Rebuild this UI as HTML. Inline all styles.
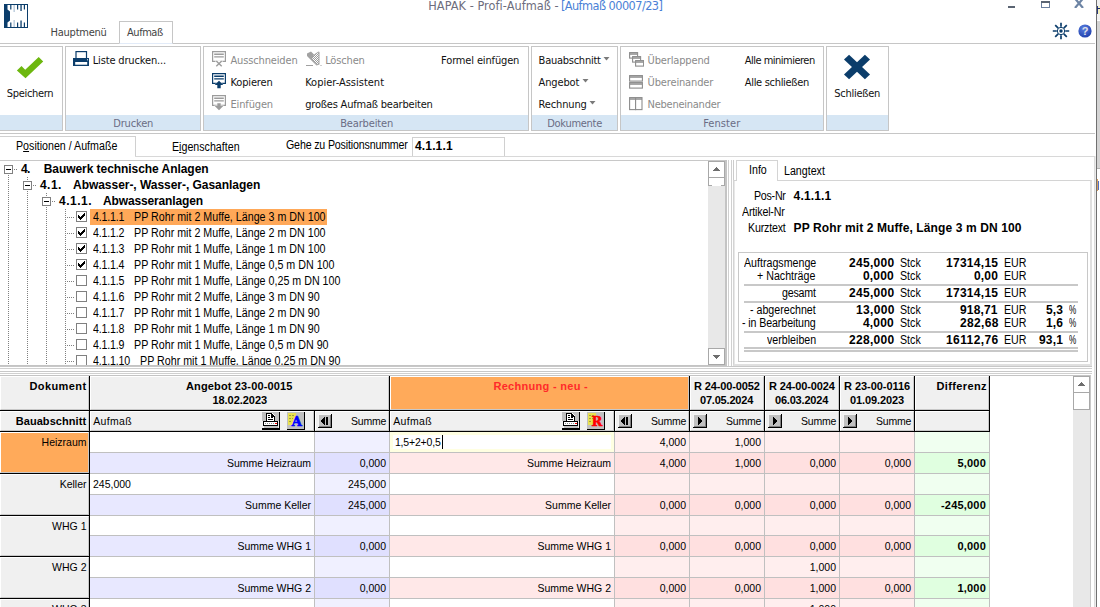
<!DOCTYPE html>
<html lang="de"><head><meta charset="utf-8"><title>HAPAK - Profi-Aufmaß</title>
<style>
html,body{margin:0;padding:0;background:#fff}
body{width:1100px;height:607px;overflow:hidden;position:relative;font-family:"Liberation Sans",sans-serif;font-size:11px;color:#000}
div,svg{position:absolute;box-sizing:border-box}
.t{white-space:pre;line-height:14px;height:14px;font-variant-ligatures:none}
.rb{font-family:"DejaVu Sans Condensed","Liberation Sans",sans-serif;font-size:11px;color:#111;letter-spacing:-0.15px;margin-top:1px}
.rd{color:#8a8a8a}
.gl{font-family:"DejaVu Sans Condensed","Liberation Sans",sans-serif;font-size:11px;color:#6a6c84;letter-spacing:-0.15px;margin-top:1px}
.ms{font-family:"Liberation Sans",sans-serif;font-size:12px;transform:scaleX(0.888);transform-origin:0 50%}
.msb{font-family:"Liberation Sans",sans-serif;font-size:12px;font-weight:bold;letter-spacing:0.15px}
.tb{font-family:"Liberation Sans",sans-serif;font-size:10.5px}
.tbb{font-family:"Liberation Sans",sans-serif;font-size:11px;font-weight:bold;letter-spacing:0.2px}
</style></head>
<body>
<svg style="left:4px;top:4px" width="24" height="24" viewBox="0 0 24 24"><rect width="24" height="24" fill="#0b3d6b"/><path d="M3.500 1H23V23H3.500V18.500L6 16.500V7.500L3.500 5.500z" fill="#fff"/><g fill="#0b3d6b"><rect x="6.200" y="1" width="1.200" height="4.500"/><rect x="13" y="1" width="1.200" height="4.500"/><rect x="16.400" y="1" width="1.300" height="6"/><rect x="19.800" y="1" width="1.200" height="4.500"/><rect x="6.200" y="18.500" width="1.200" height="4.500"/><rect x="13" y="18.500" width="1.200" height="4.500"/><rect x="16.400" y="16.500" width="1.300" height="6.500"/><rect x="19.800" y="18.500" width="1.200" height="4.500"/></g><g fill="#b4c6d8"><rect x="9.500" y="1" width="1.300" height="7"/><rect x="9.500" y="16" width="1.300" height="7"/></g></svg>
<div id="f1" class="t" style="left:428.30px;top:-2px;letter-spacing:0.051px;font-family:'DejaVu Sans Condensed','Liberation Sans',sans-serif;font-size:12.6px;line-height:16px;height:16px;color:#6d6d7d">HAPAK - Profi-Aufmaß -</div>
<div id="f2" class="t" style="left:560.91px;top:-2px;letter-spacing:-0.546px;font-family:'DejaVu Sans Condensed','Liberation Sans',sans-serif;font-size:12.6px;line-height:16px;height:16px;color:#4a7fd6">[Aufmaß 00007/23]</div>
<div style="left:1008px;top:6px;width:7px;height:2px;background:#5a6472"></div>
<svg style="left:1041px;top:0px" width="10" height="9" viewBox="0 0 10 9"><rect x="0.5" y="1.5" width="8" height="6" fill="none" stroke="#6a7f9e" stroke-width="1"/><rect x="0" y="1" width="9" height="2" fill="#5a6472"/></svg>
<svg style="left:1074px;top:-2px" width="10" height="10" viewBox="0 0 10 10"><path d="M1 0.500L9 10M9 0.500L1 10" stroke="#6d84a4" stroke-width="2.200" fill="none"/><path d="M0.500 1.500h3M6.500 1.500h3" stroke="#3a3f48" stroke-width="1.200"/></svg>
<div style="left:1097px;top:0px;width:3px;height:607px;background:#fff"></div>
<div style="left:1097px;top:0px;width:3px;height:20px;background:#f0f0f0"></div>
<div style="left:1097px;top:21px;width:3px;height:147px;background:#d4d4d4"></div>
<div style="left:1097px;top:168px;width:3px;height:1px;background:#b0b0b0"></div>
<div style="left:1097px;top:6px;width:3px;height:8px;background:#f4f0c0"></div>
<div style="left:1097px;top:6px;width:1px;height:8px;background:#2a3a80"></div>
<div style="left:1097px;top:8px;width:3px;height:1px;background:#1a2a70"></div>
<div style="left:1097px;top:179px;width:1px;height:12px;background:#d8a060"></div>
<div style="left:1098px;top:181px;width:1px;height:9px;background:#5070c8"></div>
<div style="left:1096px;top:0px;width:1px;height:607px;background:#707070"></div>
<div style="left:1094px;top:156px;width:1px;height:451px;background:#dcdcdc"></div>
<div style="left:1095px;top:156px;width:1px;height:451px;background:#ececec"></div>
<div id="f3" class="t rb" style="left:50.60px;top:25px;letter-spacing:-0.251px;color:#444">Hauptmenü</div>
<div style="left:0px;top:43px;width:1095px;height:1px;background:#c6c6c6"></div>
<div style="left:119px;top:21px;width:54px;height:23px;border:1px solid #c6c6c6;border-bottom:1px solid #e2ebf8;background:#fff"></div>
<div id="f4" class="t rb" style="left:127.00px;top:25px;letter-spacing:-0.456px;color:#444">Aufmaß</div>
<svg style="left:1052px;top:22px" width="18" height="18" viewBox="0 0 18 18"><g stroke="#0b3d6b" stroke-width="1.700" fill="none"><circle cx="9" cy="9" r="3.700" stroke-width="1"/><path d="M9 0.800v4M9 13.200v4M0.800 9h4M13.200 9h4M3.200 3.200l3 3M11.800 11.800l3 3M3.200 14.800l3-3M11.800 6.200l3-3"/></g><circle cx="9" cy="9" r="1.700" fill="#0b3d6b"/></svg>
<svg style="left:1078px;top:24px" width="14" height="14" viewBox="0 0 14 14"><defs><radialGradient id="hg" cx="0.4" cy="0.3" r="0.8"><stop offset="0" stop-color="#5a7fe0"/><stop offset="1" stop-color="#1a3aa8"/></radialGradient></defs><circle cx="7" cy="7" r="6.6" fill="url(#hg)"/><text x="7" y="11" text-anchor="middle" font-family="Liberation Sans,sans-serif" font-weight="bold" font-size="11" fill="#e0e0e8">?</text></svg>
<div style="left:-3px;top:46px;width:66px;height:85px;border:1px solid #c6c6c6;background:#fff"></div>
<div style="left:-2px;top:115px;width:64px;height:15px;background:#d6e6f4"></div>
<div style="left:65px;top:46px;width:136px;height:85px;border:1px solid #c6c6c6;background:#fff"></div>
<div style="left:66px;top:115px;width:134px;height:15px;background:#d6e6f4"></div>
<div id="f5" class="t gl" style="left:113.20px;top:116px;letter-spacing:-0.150px;">Drucken</div>
<div style="left:203px;top:46px;width:326px;height:85px;border:1px solid #c6c6c6;background:#fff"></div>
<div style="left:204px;top:115px;width:324px;height:15px;background:#d6e6f4"></div>
<div id="f6" class="t gl" style="left:340.20px;top:116px;letter-spacing:-0.150px;">Bearbeiten</div>
<div style="left:531px;top:46px;width:87px;height:85px;border:1px solid #c6c6c6;background:#fff"></div>
<div style="left:532px;top:115px;width:85px;height:15px;background:#d6e6f4"></div>
<div id="f7" class="t gl" style="left:547.20px;top:116px;letter-spacing:-0.285px;">Dokumente</div>
<div style="left:620px;top:46px;width:204px;height:85px;border:1px solid #c6c6c6;background:#fff"></div>
<div style="left:621px;top:115px;width:202px;height:15px;background:#d6e6f4"></div>
<div id="f8" class="t gl" style="left:703.20px;top:116px;letter-spacing:0.075px;">Fenster</div>
<div style="left:826px;top:46px;width:63px;height:85px;border:1px solid #c6c6c6;background:#fff"></div>
<div style="left:827px;top:115px;width:61px;height:15px;background:#d6e6f4"></div>
<div style="left:0px;top:133px;width:1095px;height:1px;background:#c6c6c6"></div>
<svg style="left:16px;top:56px" width="28" height="24" viewBox="16 56 28 24"><path d="M16.900 70.500L21.500 66L25.200 69.700L38.700 56.900L43.200 61.500L25.500 78.300Z" fill="#6db70f"/></svg>
<div id="f9" class="t rb" style="left:6.80px;top:86px;letter-spacing:-0.319px;">Speichern</div>
<svg style="left:73px;top:51px" width="16" height="15" viewBox="0 0 16 15"><rect x="3" y="0.600" width="10.500" height="7" fill="#fff" stroke="#0b3d6b" stroke-width="1.200"/><rect x="0" y="7" width="16" height="8" fill="#0b3d6b"/><rect x="2.200" y="11" width="12" height="2.700" fill="#fff"/><rect x="14" y="8.300" width="1" height="1" fill="#fff"/></svg>
<div id="f10" class="t rb" style="left:92.70px;top:53px;letter-spacing:-0.150px;">Liste drucken...</div>
<svg style="left:212px;top:51px" width="14" height="16" viewBox="0 0 14 16"><g fill="none" stroke="#9c9c9c"><path d="M0.600 0.600h12.800v9.800h-12.800z" stroke-width="1.200"/><path d="M2.200 3.300h9.600M2.200 5.900h9.600" stroke-width="1.400"/></g><rect x="3.500" y="9.500" width="7" height="2" fill="#fff"/><path d="M4.300 10l5.400 5.200M9.700 10l-5.400 5.200" stroke="#9c9c9c" stroke-width="1.400" fill="none"/></svg>
<div id="f11" class="t rb rd" style="left:230.50px;top:53px;letter-spacing:-0.150px;">Ausschneiden</div>
<svg style="left:212px;top:73px" width="14" height="16" viewBox="0 0 14 16"><g fill="none" stroke="#0b3d6b"><path d="M0.600 0.600h12.800v9.800h-12.800z" stroke-width="1.200"/><path d="M2.200 3.300h9.600M2.200 5.900h9.600" stroke-width="1.400"/></g><path d="M7 7.800l4.300 4.200h-2.600v3.200h-3.400v-3.200h-2.600z" fill="#0b3d6b" stroke="#fff" stroke-width="0.800" paint-order="stroke"/></svg>
<div id="f12" class="t rb" style="left:230.50px;top:75px;letter-spacing:-0.150px;">Kopieren</div>
<svg style="left:212px;top:95px" width="14" height="16" viewBox="0 0 14 16"><g fill="none" stroke="#9c9c9c"><path d="M0.600 0.600h12.800v9.800h-12.800z" stroke-width="1.200"/><path d="M2.200 3.300h9.600M2.200 5.900h9.600" stroke-width="1.400"/></g><path d="M7 15.200l4.300-4.200h-2.600v-2.800h-3.400v2.800h-2.600z" fill="#9c9c9c" stroke="#fff" stroke-width="0.800" paint-order="stroke"/></svg>
<div id="f13" class="t rb rd" style="left:230.50px;top:97px;letter-spacing:-0.150px;">Einfügen</div>
<svg style="left:306px;top:51px" width="16" height="16" viewBox="0 0 16 16"><defs><pattern id="ht" width="2" height="2" patternUnits="userSpaceOnUse"><rect width="2" height="2" fill="#fff"/><rect width="1" height="1" fill="#9a9a9a"/><rect x="1" y="1" width="1" height="1" fill="#9a9a9a"/></pattern></defs><path d="M1 2.500L5 0.500L8 3.500L12.500 0.500L13.500 1V13.500L10.500 14.500L1 5z" fill="#a2a2a2"/><path d="M8 4L12.500 1.500V12.500L10.500 13.200L6 8z" fill="url(#ht)"/><path d="M0 14.500h7" stroke="#a0a0a0" stroke-width="1"/><rect x="14.500" y="14" width="1" height="1" fill="#a0a0a0"/></svg>
<div id="f14" class="t rb rd" style="left:325.20px;top:53px;letter-spacing:-0.150px;">Löschen</div>
<div id="f15" class="t rb" style="left:305.20px;top:75px;letter-spacing:-0.006px;">Kopier-Assistent</div>
<div id="f16" class="t rb" style="left:305.20px;top:97px;letter-spacing:-0.201px;">großes Aufmaß bearbeiten</div>
<div id="f17" class="t rb" style="left:441.10px;top:53px;letter-spacing:-0.150px;">Formel einfügen</div>
<div id="f18" class="t rb" style="left:538.60px;top:53px;letter-spacing:-0.256px;">Bauabschnitt</div>
<svg style="left:603px;top:57px" width="7" height="4" viewBox="0 0 7 4"><path d="M0.500 0h6L3.500 3.500z" fill="#7a7a7a"/></svg>
<div id="f19" class="t rb" style="left:538.60px;top:75px;letter-spacing:-0.150px;">Angebot</div>
<svg style="left:582px;top:79px" width="7" height="4" viewBox="0 0 7 4"><path d="M0.500 0h6L3.500 3.500z" fill="#7a7a7a"/></svg>
<div id="f20" class="t rb" style="left:538.60px;top:97px;letter-spacing:-0.150px;">Rechnung</div>
<svg style="left:589px;top:101px" width="7" height="4" viewBox="0 0 7 4"><path d="M0.500 0h6L3.500 3.500z" fill="#7a7a7a"/></svg>
<svg style="left:629px;top:52px" width="15" height="15" viewBox="0 0 15 15"><g fill="#fff" stroke="#8c8c8c" stroke-width="1.1"><rect x="0.6" y="0.6" width="8" height="5.500"/><rect x="3.600" y="4.600" width="8" height="5.500"/><rect x="6.600" y="8.600" width="8" height="5.500"/><path d="M1 2h7M4 6h7M7 10h7" stroke-width="1.3"/></g></svg>
<div id="f21" class="t rb rd" style="left:647.60px;top:53px;letter-spacing:-0.150px;">Überlappend</div>
<svg style="left:629px;top:74px" width="15" height="15" viewBox="0 0 15 15"><g fill="#fff" stroke="#8c8c8c" stroke-width="1.1"><rect x="0.6" y="1.600" width="12.800" height="5.500"/><rect x="0.6" y="8.600" width="12.800" height="5.500"/><path d="M1 3h12M1 10h12" stroke-width="1.5"/></g></svg>
<div id="f22" class="t rb rd" style="left:647.60px;top:75px;letter-spacing:-0.150px;">Übereinander</div>
<svg style="left:629px;top:96px" width="15" height="15" viewBox="0 0 15 15"><g fill="#fff" stroke="#8c8c8c" stroke-width="1.1"><rect x="0.6" y="1.600" width="6" height="12"/><rect x="6.600" y="1.600" width="6.400" height="12"/><path d="M1 3h12" stroke-width="1.5"/></g></svg>
<div id="f23" class="t rb rd" style="left:647.60px;top:97px;letter-spacing:-0.255px;">Nebeneinander</div>
<div id="f24" class="t rb" style="left:744.80px;top:53px;letter-spacing:-0.516px;">Alle minimieren</div>
<div id="f25" class="t rb" style="left:744.80px;top:75px;letter-spacing:-0.316px;">Alle schließen</div>
<svg style="left:842px;top:53px" width="30" height="28" viewBox="-15 -14 30 28"><g fill="#0b3d6b" transform="scale(1,0.950)"><rect x="-14.800" y="-3.600" width="29.600" height="7.200" transform="rotate(45)"/><rect x="-14.800" y="-3.600" width="29.600" height="7.200" transform="rotate(-45)"/></g></svg>
<div id="f26" class="t rb" style="left:834.30px;top:86px;letter-spacing:-0.262px;">Schließen</div>
<div style="left:-1px;top:136px;width:137px;height:21px;border:1px solid #d0d0d0;border-bottom:none;background:#fff"></div>
<div style="left:135px;top:156px;width:960px;height:1px;background:#d8d8d8"></div>
<div id="f27" class="t ms" style="left:15.60px;top:139px;letter-spacing:0.000px;">P<u>o</u>sitionen / Aufmaße</div>
<div id="f28" class="t ms" style="left:172.40px;top:140px;letter-spacing:0.000px;">E<u>i</u>genschaften</div>
<div id="f29" class="t ms" style="left:285.60px;top:138px;letter-spacing:-0.188px;">Gehe zu Positionsnummer</div>
<div style="left:412px;top:137px;width:93px;height:19px;border:1px solid #d0d0d0;border-bottom:none;background:#fff"></div>
<div class="t msb" style="left:415px;top:139px;">4.1.1.1</div>
<div style="left:0px;top:160px;width:727px;height:1px;background:#c8c8c8"></div>
<div style="left:0px;top:161px;width:708px;height:204px;background:#fff"></div>
<div style="left:8px;top:175px;width:1px;height:190px;background:repeating-linear-gradient(to bottom,#808080 0 1px,transparent 1px 2px)"></div>
<div style="left:27px;top:191px;width:1px;height:174px;background:repeating-linear-gradient(to bottom,#808080 0 1px,transparent 1px 2px)"></div>
<div style="left:46px;top:207px;width:1px;height:158px;background:repeating-linear-gradient(to bottom,#808080 0 1px,transparent 1px 2px)"></div>
<div style="left:65px;top:209px;width:1px;height:156px;background:repeating-linear-gradient(to bottom,#808080 0 1px,transparent 1px 2px)"></div>
<div style="left:14px;top:169px;width:4px;height:1px;background:repeating-linear-gradient(to right,#808080 0 1px,transparent 1px 2px)"></div>
<div style="left:33px;top:185px;width:4px;height:1px;background:repeating-linear-gradient(to right,#808080 0 1px,transparent 1px 2px)"></div>
<div style="left:52px;top:201px;width:4px;height:1px;background:repeating-linear-gradient(to right,#808080 0 1px,transparent 1px 2px)"></div>
<div style="left:27px;top:177px;width:1px;height:4px;background:repeating-linear-gradient(to bottom,#808080 0 1px,transparent 1px 2px)"></div>
<div style="left:46px;top:193px;width:1px;height:4px;background:repeating-linear-gradient(to bottom,#808080 0 1px,transparent 1px 2px)"></div>
<div style="left:4px;top:165px;width:9px;height:9px;border:1px solid #808080;background:#fff"></div>
<div style="left:6px;top:169px;width:5px;height:1px;background:#000"></div>
<div style="left:23px;top:181px;width:9px;height:9px;border:1px solid #808080;background:#fff"></div>
<div style="left:25px;top:185px;width:5px;height:1px;background:#000"></div>
<div style="left:42px;top:197px;width:9px;height:9px;border:1px solid #808080;background:#fff"></div>
<div style="left:44px;top:201px;width:5px;height:1px;background:#000"></div>
<div id="f30" class="t msb" style="left:21.00px;top:162px;letter-spacing:-0.750px;">4.</div>
<div id="f31" class="t msb" style="left:43.70px;top:162px;letter-spacing:-0.055px;">Bauwerk technische Anlagen</div>
<div id="f32" class="t msb" style="left:40.00px;top:178px;letter-spacing:0.450px;">4.1.</div>
<div id="f33" class="t msb" style="left:73.00px;top:178px;letter-spacing:-0.036px;">Abwasser-, Wasser-, Gasanlagen</div>
<div id="f34" class="t msb" style="left:59.00px;top:194px;letter-spacing:0.510px;">4.1.1.</div>
<div id="f35" class="t msb" style="left:103.00px;top:194px;letter-spacing:-0.139px;">Abwasseranlagen</div>
<div style="left:90px;top:209px;width:237px;height:16px;background:#ffa858"></div>
<div style="left:67px;top:217px;width:8px;height:1px;background:repeating-linear-gradient(to right,#808080 0 1px,transparent 1px 2px)"></div>
<div style="left:76px;top:211px;width:11px;height:11px;border:1px solid #808080;background:#fff"><svg style="left:0px;top:0px" width="9" height="9" viewBox="0 0 9 9"><path shape-rendering="crispEdges" d="M1 3h1v1h1v1h1v-1h1v-1h1v-1h1v-1h1v3h-1v1h-1v1h-1v1h-1v1h-1v-1h-1v-1h-1z" fill="#000"/></svg></div>
<div class="t ms" style="left:92.8px;top:210px;letter-spacing:-0.2px">4.1.1.1</div>
<div class="t ms" style="left:134.2px;top:210px;transform:scaleX(0.891)">PP Rohr mit 2 Muffe, Länge 3 m DN 100</div>
<div style="left:67px;top:233px;width:8px;height:1px;background:repeating-linear-gradient(to right,#808080 0 1px,transparent 1px 2px)"></div>
<div style="left:76px;top:227px;width:11px;height:11px;border:1px solid #808080;background:#fff"><svg style="left:0px;top:0px" width="9" height="9" viewBox="0 0 9 9"><path shape-rendering="crispEdges" d="M1 3h1v1h1v1h1v-1h1v-1h1v-1h1v-1h1v3h-1v1h-1v1h-1v1h-1v1h-1v-1h-1v-1h-1z" fill="#000"/></svg></div>
<div class="t ms" style="left:92.8px;top:226px;letter-spacing:-0.2px">4.1.1.2</div>
<div class="t ms" style="left:134.2px;top:226px;transform:scaleX(0.891)">PP Rohr mit 2 Muffe, Länge 2 m DN 100</div>
<div style="left:67px;top:249px;width:8px;height:1px;background:repeating-linear-gradient(to right,#808080 0 1px,transparent 1px 2px)"></div>
<div style="left:76px;top:243px;width:11px;height:11px;border:1px solid #808080;background:#fff"><svg style="left:0px;top:0px" width="9" height="9" viewBox="0 0 9 9"><path shape-rendering="crispEdges" d="M1 3h1v1h1v1h1v-1h1v-1h1v-1h1v-1h1v3h-1v1h-1v1h-1v1h-1v1h-1v-1h-1v-1h-1z" fill="#000"/></svg></div>
<div class="t ms" style="left:92.8px;top:242px;letter-spacing:-0.2px">4.1.1.3</div>
<div class="t ms" style="left:134.2px;top:242px;transform:scaleX(0.891)">PP Rohr mit 1 Muffe, Länge 1 m DN 100</div>
<div style="left:67px;top:265px;width:8px;height:1px;background:repeating-linear-gradient(to right,#808080 0 1px,transparent 1px 2px)"></div>
<div style="left:76px;top:259px;width:11px;height:11px;border:1px solid #808080;background:#fff"><svg style="left:0px;top:0px" width="9" height="9" viewBox="0 0 9 9"><path shape-rendering="crispEdges" d="M1 3h1v1h1v1h1v-1h1v-1h1v-1h1v-1h1v3h-1v1h-1v1h-1v1h-1v1h-1v-1h-1v-1h-1z" fill="#000"/></svg></div>
<div class="t ms" style="left:92.8px;top:258px;letter-spacing:-0.2px">4.1.1.4</div>
<div class="t ms" style="left:134.2px;top:258px;transform:scaleX(0.891)">PP Rohr mit 1 Muffe, Länge 0,5 m DN 100</div>
<div style="left:67px;top:281px;width:8px;height:1px;background:repeating-linear-gradient(to right,#808080 0 1px,transparent 1px 2px)"></div>
<div style="left:76px;top:275px;width:11px;height:11px;border:1px solid #808080;background:#fff"></div>
<div class="t ms" style="left:92.8px;top:274px;letter-spacing:-0.2px">4.1.1.5</div>
<div class="t ms" style="left:134.2px;top:274px;transform:scaleX(0.891)">PP Rohr mit 1 Muffe, Länge 0,25 m DN 100</div>
<div style="left:67px;top:297px;width:8px;height:1px;background:repeating-linear-gradient(to right,#808080 0 1px,transparent 1px 2px)"></div>
<div style="left:76px;top:291px;width:11px;height:11px;border:1px solid #808080;background:#fff"></div>
<div class="t ms" style="left:92.8px;top:290px;letter-spacing:-0.2px">4.1.1.6</div>
<div class="t ms" style="left:134.2px;top:290px;transform:scaleX(0.891)">PP Rohr mit 2 Muffe, Länge 3 m DN 90</div>
<div style="left:67px;top:313px;width:8px;height:1px;background:repeating-linear-gradient(to right,#808080 0 1px,transparent 1px 2px)"></div>
<div style="left:76px;top:307px;width:11px;height:11px;border:1px solid #808080;background:#fff"></div>
<div class="t ms" style="left:92.8px;top:306px;letter-spacing:-0.2px">4.1.1.7</div>
<div class="t ms" style="left:134.2px;top:306px;transform:scaleX(0.891)">PP Rohr mit 1 Muffe, Länge 2 m DN 90</div>
<div style="left:67px;top:329px;width:8px;height:1px;background:repeating-linear-gradient(to right,#808080 0 1px,transparent 1px 2px)"></div>
<div style="left:76px;top:323px;width:11px;height:11px;border:1px solid #808080;background:#fff"></div>
<div class="t ms" style="left:92.8px;top:322px;letter-spacing:-0.2px">4.1.1.8</div>
<div class="t ms" style="left:134.2px;top:322px;transform:scaleX(0.891)">PP Rohr mit 1 Muffe, Länge 1 m DN 90</div>
<div style="left:67px;top:345px;width:8px;height:1px;background:repeating-linear-gradient(to right,#808080 0 1px,transparent 1px 2px)"></div>
<div style="left:76px;top:339px;width:11px;height:11px;border:1px solid #808080;background:#fff"></div>
<div class="t ms" style="left:92.8px;top:338px;letter-spacing:-0.2px">4.1.1.9</div>
<div class="t ms" style="left:134.2px;top:338px;transform:scaleX(0.891)">PP Rohr mit 1 Muffe, Länge 0,5 m DN 90</div>
<div style="left:67px;top:361px;width:8px;height:1px;background:repeating-linear-gradient(to right,#808080 0 1px,transparent 1px 2px)"></div>
<div style="left:76px;top:355px;width:11px;height:11px;border:1px solid #808080;background:#fff"></div>
<div class="t ms" style="left:92.8px;top:354px;letter-spacing:-0.2px">4.1.1.10</div>
<div class="t ms" style="left:140.2px;top:354px;transform:scaleX(0.891)">PP Rohr mit 1 Muffe, Länge 0,25 m DN 90</div>
<div style="left:708px;top:161px;width:17px;height:204px;background:#e8e8e8"></div>
<div style="left:708px;top:161px;width:17px;height:17px;border:1px solid #a8a8a8;background:#fff"><svg shape-rendering="crispEdges" style="left:4px;top:5px" width="7" height="4" viewBox="0 0 7 4"><path d="M3 0h1v1h1v1h1v1h1v1h-7v-1h1v-1h1v-1h1z" fill="#6e6e6e"/></svg></div>
<div style="left:708px;top:177px;width:17px;height:9px;border:1px solid #a8a8a8;background:#fff"></div>
<div style="left:712px;top:185px;width:9px;height:1px;background:#fff"></div>
<div style="left:712px;top:178px;width:9px;height:1px;background:#fff"></div>
<div style="left:708px;top:348px;width:17px;height:17px;border:1px solid #a8a8a8;background:#fff"><svg shape-rendering="crispEdges" style="left:4px;top:6px" width="7" height="4" viewBox="0 0 7 4"><path d="M0 0h7v1h-1v1h-1v1h-1v1h-1v-1h-1v-1h-1v-1h-1z" fill="#6e6e6e"/></svg></div>
<div style="left:725px;top:160px;width:2px;height:206px;background:#c4c4c4"></div>
<div style="left:0px;top:365px;width:727px;height:1px;background:#c4c4c4"></div>
<div style="left:728px;top:160px;width:1px;height:206px;background:#d0d0d0"></div>
<div style="left:731px;top:160px;width:1px;height:206px;background:#d0d0d0"></div>
<div style="left:733px;top:160px;width:1px;height:206px;background:#cccccc"></div>
<div style="left:733px;top:180px;width:359px;height:186px;border:1px solid #d4d4d4;border-right:2px solid #e0e0e0;border-bottom:2px solid #e0e0e0;background:#fff"></div>
<div style="left:734px;top:181px;width:1px;height:183px;background:#e8e8e8"></div>
<div style="left:736px;top:160px;width:42px;height:21px;border:1px solid #d4d4d4;border-bottom:none;background:#fff"></div>
<div id="f36" class="t ms" style="left:749.40px;top:163px;letter-spacing:0.000px;">Info</div>
<div id="f37" class="t ms" style="left:784.40px;top:164px;letter-spacing:0.000px;">Langtext</div>
<div id="f38" class="t ms" style="left:753.60px;top:189px;letter-spacing:-0.288px;">Pos-Nr</div>
<div id="f39" class="t msb" style="left:793.60px;top:189px;letter-spacing:0.150px;">4.1.1.1</div>
<div id="f40" class="t ms" style="left:742.00px;top:205px;letter-spacing:-0.200px;">Artikel-Nr</div>
<div id="f41" class="t ms" style="left:747.60px;top:221px;letter-spacing:-0.206px;">Kurztext</div>
<div id="f42" class="t msb" style="left:793.60px;top:221px;letter-spacing:0.110px;">PP Rohr mit 2 Muffe, Länge 3 m DN 100</div>
<div style="left:738px;top:252px;width:350px;height:110px;border:1px solid #c8c8c8;background:#fff"></div>
<div id="f43" class="t ms" style="left:744.00px;top:256px;letter-spacing:0.000px;">Auftragsmenge</div>
<div id="f44" class="t msb" style="left:849.00px;top:256px;letter-spacing:0.300px;">245,000</div>
<div id="f45" class="t ms" style="left:899.60px;top:256px;letter-spacing:0.000px;">Stck</div>
<div id="f46" class="t msb" style="left:946.00px;top:256px;letter-spacing:0.279px;">17314,15</div>
<div id="f47" class="t ms" style="left:1003.60px;top:256px;letter-spacing:0.000px;">EUR</div>
<div id="f48" class="t ms" style="left:757.00px;top:269px;letter-spacing:0.000px;">+ Nachträge</div>
<div id="f49" class="t msb" style="left:863.00px;top:269px;letter-spacing:0.150px;">0,000</div>
<div id="f50" class="t ms" style="left:899.60px;top:269px;letter-spacing:0.000px;">Stck</div>
<div id="f51" class="t msb" style="left:974.00px;top:269px;letter-spacing:0.150px;">0,00</div>
<div id="f52" class="t ms" style="left:1003.60px;top:269px;letter-spacing:0.000px;">EUR</div>
<div id="f53" class="t ms" style="left:781.60px;top:286px;letter-spacing:-0.216px;">gesamt</div>
<div id="f54" class="t msb" style="left:849.00px;top:286px;letter-spacing:0.300px;">245,000</div>
<div id="f55" class="t ms" style="left:899.60px;top:286px;letter-spacing:0.000px;">Stck</div>
<div id="f56" class="t msb" style="left:946.00px;top:286px;letter-spacing:0.279px;">17314,15</div>
<div id="f57" class="t ms" style="left:1003.60px;top:286px;letter-spacing:0.000px;">EUR</div>
<div id="f58" class="t ms" style="left:750.00px;top:303px;letter-spacing:0.000px;">- abgerechnet</div>
<div id="f59" class="t msb" style="left:856.00px;top:303px;letter-spacing:0.330px;">13,000</div>
<div id="f60" class="t ms" style="left:899.60px;top:303px;letter-spacing:0.000px;">Stck</div>
<div id="f61" class="t msb" style="left:960.00px;top:303px;letter-spacing:0.150px;">918,71</div>
<div id="f62" class="t ms" style="left:1003.60px;top:303px;letter-spacing:0.000px;">EUR</div>
<div id="f63" class="t msb" style="left:1046.00px;top:303px;letter-spacing:0.150px;">5,3</div>
<div class="t ms" style="left:1068.5px;top:303px;transform:scaleX(0.68)">%</div>
<div id="f64" class="t ms" style="left:742.40px;top:316px;letter-spacing:-0.120px;">- in Bearbeitung</div>
<div id="f65" class="t msb" style="left:863.00px;top:316px;letter-spacing:0.150px;">4,000</div>
<div id="f66" class="t ms" style="left:899.60px;top:316px;letter-spacing:0.000px;">Stck</div>
<div id="f67" class="t msb" style="left:960.00px;top:316px;letter-spacing:0.330px;">282,68</div>
<div id="f68" class="t ms" style="left:1003.60px;top:316px;letter-spacing:0.000px;">EUR</div>
<div id="f69" class="t msb" style="left:1046.00px;top:316px;letter-spacing:0.150px;">1,6</div>
<div class="t ms" style="left:1068.5px;top:316px;transform:scaleX(0.68)">%</div>
<div id="f70" class="t ms" style="left:767.00px;top:333px;letter-spacing:0.000px;">verbleiben</div>
<div id="f71" class="t msb" style="left:849.00px;top:333px;letter-spacing:0.300px;">228,000</div>
<div id="f72" class="t ms" style="left:899.60px;top:333px;letter-spacing:0.000px;">Stck</div>
<div id="f73" class="t msb" style="left:946.00px;top:333px;letter-spacing:0.407px;">16112,76</div>
<div id="f74" class="t ms" style="left:1003.60px;top:333px;letter-spacing:0.000px;">EUR</div>
<div id="f75" class="t msb" style="left:1039.00px;top:333px;letter-spacing:0.150px;">93,1</div>
<div class="t ms" style="left:1068.5px;top:333px;transform:scaleX(0.68)">%</div>
<div style="left:744px;top:284px;width:334px;height:2px;background:#c8c8c8"></div>
<div style="left:744px;top:301px;width:334px;height:2px;background:#c8c8c8"></div>
<div style="left:744px;top:331px;width:334px;height:2px;background:#c8c8c8"></div>
<div style="left:744px;top:347px;width:334px;height:2px;background:#c8c8c8"></div>
<div style="left:744px;top:350px;width:334px;height:2px;background:#c8c8c8"></div>
<div style="left:0px;top:366px;width:1092px;height:10px;background:#fff"></div>
<div style="left:0px;top:366px;width:1092px;height:1px;background:#c8c8c8"></div>
<div style="left:0px;top:368px;width:1092px;height:1px;background:#d0d0d0"></div>
<div style="left:0px;top:371px;width:1092px;height:1px;background:#c8c8c8"></div>
<div style="left:0px;top:373px;width:1092px;height:1px;background:#d0d0d0"></div>
<div style="left:0px;top:375px;width:1091px;height:1px;background:#c4c4c4"></div>
<div style="left:0px;top:376px;width:89px;height:34px;background:#f0f0f0;border-top:1px solid #fff;border-left:1px solid #fff;border-right:1px solid #c8c8c8;border-bottom:1px solid #c8c8c8"></div>
<div style="left:90px;top:376px;width:299px;height:34px;background:#f0f0f0;border-top:1px solid #fff;border-left:1px solid #fff;border-right:1px solid #c8c8c8;border-bottom:1px solid #c8c8c8"></div>
<div style="left:390px;top:376px;width:299px;height:34px;background:#ffaa5a;border-top:1px solid #fff;border-left:1px solid #fff;border-right:1px solid #c8c8c8;border-bottom:1px solid #c8c8c8"></div>
<div style="left:690px;top:376px;width:74px;height:34px;background:#f0f0f0;border-top:1px solid #fff;border-left:1px solid #fff;border-right:1px solid #c8c8c8;border-bottom:1px solid #c8c8c8"></div>
<div style="left:765px;top:376px;width:74px;height:34px;background:#f0f0f0;border-top:1px solid #fff;border-left:1px solid #fff;border-right:1px solid #c8c8c8;border-bottom:1px solid #c8c8c8"></div>
<div style="left:840px;top:376px;width:74px;height:34px;background:#f0f0f0;border-top:1px solid #fff;border-left:1px solid #fff;border-right:1px solid #c8c8c8;border-bottom:1px solid #c8c8c8"></div>
<div style="left:915px;top:376px;width:74px;height:34px;background:#f0f0f0;border-top:1px solid #fff;border-left:1px solid #fff;border-right:1px solid #c8c8c8;border-bottom:1px solid #c8c8c8"></div>
<div style="left:0px;top:411px;width:89px;height:20px;background:#f0f0f0;border-top:1px solid #fff;border-left:1px solid #fff;border-right:1px solid #c8c8c8;border-bottom:1px solid #c8c8c8"></div>
<div style="left:90px;top:411px;width:224px;height:20px;background:#f0f0f0;border-top:1px solid #fff;border-left:1px solid #fff;border-right:1px solid #c8c8c8;border-bottom:1px solid #c8c8c8"></div>
<div style="left:315px;top:411px;width:74px;height:20px;background:#f0f0f0;border-top:1px solid #fff;border-left:1px solid #fff;border-right:1px solid #c8c8c8;border-bottom:1px solid #c8c8c8"></div>
<div style="left:390px;top:411px;width:224px;height:20px;background:#f0f0f0;border-top:1px solid #fff;border-left:1px solid #fff;border-right:1px solid #c8c8c8;border-bottom:1px solid #c8c8c8"></div>
<div style="left:615px;top:411px;width:74px;height:20px;background:#f0f0f0;border-top:1px solid #fff;border-left:1px solid #fff;border-right:1px solid #c8c8c8;border-bottom:1px solid #c8c8c8"></div>
<div style="left:690px;top:411px;width:74px;height:20px;background:#f0f0f0;border-top:1px solid #fff;border-left:1px solid #fff;border-right:1px solid #c8c8c8;border-bottom:1px solid #c8c8c8"></div>
<div style="left:765px;top:411px;width:74px;height:20px;background:#f0f0f0;border-top:1px solid #fff;border-left:1px solid #fff;border-right:1px solid #c8c8c8;border-bottom:1px solid #c8c8c8"></div>
<div style="left:840px;top:411px;width:74px;height:20px;background:#f0f0f0;border-top:1px solid #fff;border-left:1px solid #fff;border-right:1px solid #c8c8c8;border-bottom:1px solid #c8c8c8"></div>
<div style="left:915px;top:411px;width:74px;height:20px;background:#f0f0f0;border-top:1px solid #fff;border-left:1px solid #fff;border-right:1px solid #c8c8c8;border-bottom:1px solid #c8c8c8"></div>
<div id="f76" class="t tbb" style="left:29.40px;top:379px;letter-spacing:0.419px;">Dokument</div>
<div id="f77" class="t tbb" style="left:186.00px;top:379px;letter-spacing:0.147px;">Angebot 23-00-0015</div>
<div id="f78" class="t tbb" style="left:212.40px;top:393px;letter-spacing:-0.040px;">18.02.2023</div>
<div id="f79" class="t tbb" style="left:493.40px;top:379px;letter-spacing:0.296px;color:#ff2a2a">Rechnung - neu -</div>
<div id="f80" class="t tbb" style="left:694.00px;top:379px;letter-spacing:-0.127px;">R 24-00-0052</div>
<div id="f81" class="t tbb" style="left:700.00px;top:393px;letter-spacing:-0.200px;">07.05.2024</div>
<div id="f82" class="t tbb" style="left:769.00px;top:379px;letter-spacing:-0.127px;">R 24-00-0024</div>
<div id="f83" class="t tbb" style="left:775.00px;top:393px;letter-spacing:-0.200px;">06.03.2024</div>
<div id="f84" class="t tbb" style="left:844.00px;top:379px;letter-spacing:-0.045px;">R 23-00-0116</div>
<div id="f85" class="t tbb" style="left:850.00px;top:393px;letter-spacing:-0.100px;">01.09.2023</div>
<div id="f86" class="t tbb" style="left:936.40px;top:379px;letter-spacing:0.380px;">Differenz</div>
<div id="f87" class="t tbb" style="left:15.70px;top:414px;letter-spacing:0.069px;">Bauabschnitt</div>
<div id="f88" class="t tb" style="left:93.20px;top:414px;letter-spacing:0.324px;">Aufmaß</div>
<div id="f89" class="t tb" style="left:393.20px;top:414px;letter-spacing:0.324px;">Aufmaß</div>
<div id="f90" class="t tb" style="left:351.00px;top:414px;letter-spacing:-0.225px;">Summe</div>
<div id="f91" class="t tb" style="left:651.00px;top:414px;letter-spacing:-0.225px;">Summe</div>
<div id="f92" class="t tb" style="left:726.00px;top:414px;letter-spacing:-0.225px;">Summe</div>
<div id="f93" class="t tb" style="left:801.00px;top:414px;letter-spacing:-0.225px;">Summe</div>
<div id="f94" class="t tb" style="left:876.00px;top:414px;letter-spacing:-0.225px;">Summe</div>
<svg shape-rendering="crispEdges" style="left:318px;top:414px" width="14" height="14" viewBox="0 0 14 14"><rect width="14" height="14" fill="#c0c0c0"/><path d="M0 0h13v1h-12v12h-1z" fill="#f4f4f4"/><path d="M13 0h1v14h-14v-1h13z" fill="#000"/><path d="M12 1h1v12h-12v-1h11z" fill="#808080"/><path d="M7 3v8h-1v-1h-1v-1h-1v-1h-1v-2h1v-1h1v-1h1v-1z" fill="#000"/><rect x="8" y="3" width="2" height="8" fill="#000"/></svg>
<svg shape-rendering="crispEdges" style="left:618px;top:414px" width="14" height="14" viewBox="0 0 14 14"><rect width="14" height="14" fill="#c0c0c0"/><path d="M0 0h13v1h-12v12h-1z" fill="#f4f4f4"/><path d="M13 0h1v14h-14v-1h13z" fill="#000"/><path d="M12 1h1v12h-12v-1h11z" fill="#808080"/><path d="M7 3v8h-1v-1h-1v-1h-1v-1h-1v-2h1v-1h1v-1h1v-1z" fill="#000"/><rect x="8" y="3" width="2" height="8" fill="#000"/></svg>
<svg shape-rendering="crispEdges" style="left:693px;top:414px" width="14" height="14" viewBox="0 0 14 14"><rect width="14" height="14" fill="#c0c0c0"/><path d="M0 0h13v1h-12v12h-1z" fill="#f4f4f4"/><path d="M13 0h1v14h-14v-1h13z" fill="#000"/><path d="M12 1h1v12h-12v-1h11z" fill="#808080"/><path d="M5 3v8h1v-1h1v-1h1v-1h1v-2h-1v-1h-1v-1h-1v-1z" fill="#000"/></svg>
<svg shape-rendering="crispEdges" style="left:768px;top:414px" width="14" height="14" viewBox="0 0 14 14"><rect width="14" height="14" fill="#c0c0c0"/><path d="M0 0h13v1h-12v12h-1z" fill="#f4f4f4"/><path d="M13 0h1v14h-14v-1h13z" fill="#000"/><path d="M12 1h1v12h-12v-1h11z" fill="#808080"/><path d="M5 3v8h1v-1h1v-1h1v-1h1v-2h-1v-1h-1v-1h-1v-1z" fill="#000"/></svg>
<svg shape-rendering="crispEdges" style="left:843px;top:414px" width="14" height="14" viewBox="0 0 14 14"><rect width="14" height="14" fill="#c0c0c0"/><path d="M0 0h13v1h-12v12h-1z" fill="#f4f4f4"/><path d="M13 0h1v14h-14v-1h13z" fill="#000"/><path d="M12 1h1v12h-12v-1h11z" fill="#808080"/><path d="M5 3v8h1v-1h1v-1h1v-1h1v-2h-1v-1h-1v-1h-1v-1z" fill="#000"/></svg>
<svg shape-rendering="crispEdges" style="left:262px;top:412px" width="18" height="18" viewBox="0 0 18 18"><rect x="0" y="0" width="17" height="9" fill="#c0c0c0"/><path d="M17 0h1v18h-1z" fill="#000"/><path d="M4 1h6l3 3v6h-9z" fill="#fff"/><path d="M4 1h6v1h1v1h1v1h1v6h-1v-5h-3v-3h-4v8h-1z" fill="#000"/><path d="M6 3h2v1h-2zM6 5h2v1h-2zM6 7h5v1h-5zM9 5h2v1h-2z" fill="#000"/><rect x="1" y="9" width="15" height="5" fill="#fff"/><path d="M1 9h15v5h-15zM2 10v3h13v-3z" fill="#000" fill-rule="evenodd"/><path d="M3 11h1v1h-1zM5 11h1v1h-1zM7 11h1v1h-1zM9 11h1v1h-1zM11 11h1v1h-1z" fill="#909090"/><rect x="13" y="11" width="2" height="1" fill="#f00000"/><rect x="2" y="14" width="14" height="2" fill="#c0c0c0"/><rect x="0" y="16" width="18" height="2" fill="#000"/></svg>
<svg style="left:287px;top:412px" width="18" height="18" viewBox="0 0 18 18"><g shape-rendering="crispEdges"><rect x="0" y="0" width="18" height="18" fill="#c0c0c0"/><path d="M17 0h1v18h-18v-1h17z" fill="#000"/><path d="M1 1h8v4l-4 8h-4z" fill="#e8e050"/><path d="M2 3h2v1h-2zM5 3h2v1h-2zM2 6h2v1h-2zM5 6h1v1h-1zM2 9h2v1h-2z" fill="#a0a040"/></g><text x="9.800" y="14" text-anchor="middle" font-family="DejaVu Serif,Liberation Serif,serif" font-weight="bold" font-size="13" fill="#0000ff" stroke="#0000ff" stroke-width="0.600">A</text></svg>
<svg shape-rendering="crispEdges" style="left:562px;top:412px" width="18" height="18" viewBox="0 0 18 18"><rect x="0" y="0" width="17" height="9" fill="#c0c0c0"/><path d="M17 0h1v18h-1z" fill="#000"/><path d="M4 1h6l3 3v6h-9z" fill="#fff"/><path d="M4 1h6v1h1v1h1v1h1v6h-1v-5h-3v-3h-4v8h-1z" fill="#000"/><path d="M6 3h2v1h-2zM6 5h2v1h-2zM6 7h5v1h-5zM9 5h2v1h-2z" fill="#000"/><rect x="1" y="9" width="15" height="5" fill="#fff"/><path d="M1 9h15v5h-15zM2 10v3h13v-3z" fill="#000" fill-rule="evenodd"/><path d="M3 11h1v1h-1zM5 11h1v1h-1zM7 11h1v1h-1zM9 11h1v1h-1zM11 11h1v1h-1z" fill="#909090"/><rect x="13" y="11" width="2" height="1" fill="#f00000"/><rect x="2" y="14" width="14" height="2" fill="#c0c0c0"/><rect x="0" y="16" width="18" height="2" fill="#000"/></svg>
<svg style="left:587px;top:412px" width="18" height="18" viewBox="0 0 18 18"><g shape-rendering="crispEdges"><rect x="0" y="0" width="18" height="18" fill="#c0c0c0"/><path d="M17 0h1v18h-18v-1h17z" fill="#000"/><path d="M1 1h8v4l-4 8h-4z" fill="#e8e050"/><path d="M2 3h2v1h-2zM5 3h2v1h-2zM2 6h2v1h-2zM5 6h1v1h-1zM2 9h2v1h-2z" fill="#a0a040"/></g><text x="9.800" y="14" text-anchor="middle" font-family="DejaVu Serif,Liberation Serif,serif" font-weight="bold" font-size="13" fill="#ff0000" stroke="#ff0000" stroke-width="0.600">R</text></svg>
<div style="left:89px;top:376px;width:1px;height:55px;background:#000"></div>
<div style="left:314px;top:411px;width:1px;height:20px;background:#000"></div>
<div style="left:389px;top:376px;width:1px;height:55px;background:#000"></div>
<div style="left:614px;top:411px;width:1px;height:20px;background:#000"></div>
<div style="left:689px;top:376px;width:1px;height:55px;background:#000"></div>
<div style="left:764px;top:376px;width:1px;height:55px;background:#000"></div>
<div style="left:839px;top:376px;width:1px;height:55px;background:#000"></div>
<div style="left:914px;top:376px;width:1px;height:55px;background:#000"></div>
<div style="left:989px;top:376px;width:1px;height:55px;background:#000"></div>
<div style="left:0px;top:410px;width:989px;height:1px;background:#000"></div>
<div style="left:0px;top:431px;width:989px;height:1px;background:#000"></div>
<div style="left:989px;top:376px;width:1px;height:56px;background:#000"></div>
<div style="left:0px;top:432px;width:89px;height:41px;background:#ffaa5a;border-top:1px solid #fff;border-left:1px solid #fff;border-right:1px solid #c8c8c8;border-bottom:1px solid #c8c8c8"></div>
<div class="t tb" style="left:-313.5px;top:435px;width:400px;text-align:right;transform-origin:100% 50%;">Heizraum</div>
<div style="left:0px;top:473px;width:90px;height:1px;background:#000"></div>
<div style="left:89px;top:432px;width:1px;height:42px;background:#000"></div>
<div style="left:90px;top:432px;width:224px;height:20px;background:#fff"></div>
<div style="left:315px;top:432px;width:74px;height:20px;background:#f0f0ff"></div>
<div style="left:390px;top:432px;width:224px;height:20px;background:#fff"></div>
<div style="left:615px;top:432px;width:74px;height:20px;background:#ffeeee"></div>
<div style="left:690px;top:432px;width:74px;height:20px;background:#ffeeee"></div>
<div style="left:765px;top:432px;width:74px;height:20px;background:#ffeeee"></div>
<div style="left:840px;top:432px;width:74px;height:20px;background:#ffeeee"></div>
<div style="left:915px;top:432px;width:74px;height:20px;background:#f0fff0"></div>
<div style="left:90px;top:453px;width:224px;height:20px;background:#e8e8ff"></div>
<div style="left:315px;top:453px;width:74px;height:20px;background:#e0e0ff"></div>
<div style="left:390px;top:453px;width:224px;height:20px;background:#ffe8e8"></div>
<div style="left:615px;top:453px;width:74px;height:20px;background:#ffe0e0"></div>
<div style="left:690px;top:453px;width:74px;height:20px;background:#ffe0e0"></div>
<div style="left:765px;top:453px;width:74px;height:20px;background:#ffe0e0"></div>
<div style="left:840px;top:453px;width:74px;height:20px;background:#ffe0e0"></div>
<div style="left:915px;top:453px;width:74px;height:20px;background:#e0ffe0"></div>
<div style="left:90px;top:452px;width:900px;height:1px;background:#c0c0c0"></div>
<div style="left:90px;top:473px;width:900px;height:1px;background:#c0c0c0"></div>
<div style="left:314px;top:432px;width:1px;height:42px;background:#c0c0c0"></div>
<div style="left:389px;top:432px;width:1px;height:42px;background:#c0c0c0"></div>
<div style="left:614px;top:432px;width:1px;height:42px;background:#c0c0c0"></div>
<div style="left:689px;top:432px;width:1px;height:42px;background:#c0c0c0"></div>
<div style="left:764px;top:432px;width:1px;height:42px;background:#c0c0c0"></div>
<div style="left:839px;top:432px;width:1px;height:42px;background:#c0c0c0"></div>
<div style="left:914px;top:432px;width:1px;height:42px;background:#c0c0c0"></div>
<div style="left:989px;top:432px;width:1px;height:42px;background:#c0c0c0"></div>
<div style="left:390px;top:432px;width:224px;height:20px;background:#ffffe1"></div>
<div style="left:393px;top:435px;width:218px;height:14px;background:#fff"></div>
<div id="f95" class="t tb" style="left:394.90px;top:435px;letter-spacing:-0.169px;">1,5+2+0,5</div>
<div style="left:442px;top:435px;width:1px;height:14px;background:#000"></div>
<div class="t tb" style="left:286px;top:435px;width:400px;text-align:right;transform-origin:100% 50%;">4,000</div>
<div class="t tb" style="left:361px;top:435px;width:400px;text-align:right;transform-origin:100% 50%;">1,000</div>
<div class="t tb" style="left:-89px;top:456px;width:400px;text-align:right;transform-origin:100% 50%;">Summe Heizraum</div>
<div class="t tb" style="left:-14px;top:456px;width:400px;text-align:right;transform-origin:100% 50%;">0,000</div>
<div class="t tb" style="left:211px;top:456px;width:400px;text-align:right;transform-origin:100% 50%;">Summe Heizraum</div>
<div class="t tb" style="left:286px;top:456px;width:400px;text-align:right;transform-origin:100% 50%;">4,000</div>
<div class="t tb" style="left:361px;top:456px;width:400px;text-align:right;transform-origin:100% 50%;">1,000</div>
<div class="t tb" style="left:436px;top:456px;width:400px;text-align:right;transform-origin:100% 50%;">0,000</div>
<div class="t tb" style="left:511px;top:456px;width:400px;text-align:right;transform-origin:100% 50%;">0,000</div>
<div class="t tbb" style="left:586px;top:456px;width:400px;text-align:right;transform-origin:100% 50%;">5,000</div>
<div style="left:0px;top:474px;width:89px;height:41px;background:#f0f0f0;border-top:1px solid #fff;border-left:1px solid #fff;border-right:1px solid #c8c8c8;border-bottom:1px solid #c8c8c8"></div>
<div class="t tb" style="left:-313.5px;top:477px;width:400px;text-align:right;transform-origin:100% 50%;">Keller</div>
<div style="left:0px;top:515px;width:90px;height:1px;background:#000"></div>
<div style="left:89px;top:474px;width:1px;height:42px;background:#000"></div>
<div style="left:90px;top:474px;width:224px;height:20px;background:#fff"></div>
<div style="left:315px;top:474px;width:74px;height:20px;background:#f0f0ff"></div>
<div style="left:390px;top:474px;width:224px;height:20px;background:#fff"></div>
<div style="left:615px;top:474px;width:74px;height:20px;background:#ffeeee"></div>
<div style="left:690px;top:474px;width:74px;height:20px;background:#ffeeee"></div>
<div style="left:765px;top:474px;width:74px;height:20px;background:#ffeeee"></div>
<div style="left:840px;top:474px;width:74px;height:20px;background:#ffeeee"></div>
<div style="left:915px;top:474px;width:74px;height:20px;background:#f0fff0"></div>
<div style="left:90px;top:495px;width:224px;height:20px;background:#e8e8ff"></div>
<div style="left:315px;top:495px;width:74px;height:20px;background:#e0e0ff"></div>
<div style="left:390px;top:495px;width:224px;height:20px;background:#ffe8e8"></div>
<div style="left:615px;top:495px;width:74px;height:20px;background:#ffe0e0"></div>
<div style="left:690px;top:495px;width:74px;height:20px;background:#ffe0e0"></div>
<div style="left:765px;top:495px;width:74px;height:20px;background:#ffe0e0"></div>
<div style="left:840px;top:495px;width:74px;height:20px;background:#ffe0e0"></div>
<div style="left:915px;top:495px;width:74px;height:20px;background:#e0ffe0"></div>
<div style="left:90px;top:494px;width:900px;height:1px;background:#c0c0c0"></div>
<div style="left:90px;top:515px;width:900px;height:1px;background:#c0c0c0"></div>
<div style="left:314px;top:474px;width:1px;height:42px;background:#c0c0c0"></div>
<div style="left:389px;top:474px;width:1px;height:42px;background:#c0c0c0"></div>
<div style="left:614px;top:474px;width:1px;height:42px;background:#c0c0c0"></div>
<div style="left:689px;top:474px;width:1px;height:42px;background:#c0c0c0"></div>
<div style="left:764px;top:474px;width:1px;height:42px;background:#c0c0c0"></div>
<div style="left:839px;top:474px;width:1px;height:42px;background:#c0c0c0"></div>
<div style="left:914px;top:474px;width:1px;height:42px;background:#c0c0c0"></div>
<div style="left:989px;top:474px;width:1px;height:42px;background:#c0c0c0"></div>
<div class="t tb" style="left:93px;top:477px;">245,000</div>
<div class="t tb" style="left:-14px;top:477px;width:400px;text-align:right;transform-origin:100% 50%;">245,000</div>
<div class="t tb" style="left:-89px;top:498px;width:400px;text-align:right;transform-origin:100% 50%;">Summe Keller</div>
<div class="t tb" style="left:-14px;top:498px;width:400px;text-align:right;transform-origin:100% 50%;">245,000</div>
<div class="t tb" style="left:211px;top:498px;width:400px;text-align:right;transform-origin:100% 50%;">Summe Keller</div>
<div class="t tb" style="left:286px;top:498px;width:400px;text-align:right;transform-origin:100% 50%;">0,000</div>
<div class="t tb" style="left:361px;top:498px;width:400px;text-align:right;transform-origin:100% 50%;">0,000</div>
<div class="t tb" style="left:436px;top:498px;width:400px;text-align:right;transform-origin:100% 50%;">0,000</div>
<div class="t tb" style="left:511px;top:498px;width:400px;text-align:right;transform-origin:100% 50%;">0,000</div>
<div class="t tbb" style="left:586px;top:498px;width:400px;text-align:right;transform-origin:100% 50%;">-245,000</div>
<div style="left:0px;top:516px;width:89px;height:40px;background:#f0f0f0;border-top:1px solid #fff;border-left:1px solid #fff;border-right:1px solid #c8c8c8;border-bottom:1px solid #c8c8c8"></div>
<div class="t tb" style="left:-313.5px;top:519px;width:400px;text-align:right;transform-origin:100% 50%;">WHG 1</div>
<div style="left:0px;top:556px;width:90px;height:1px;background:#000"></div>
<div style="left:89px;top:516px;width:1px;height:41px;background:#000"></div>
<div style="left:90px;top:516px;width:224px;height:19px;background:#fff"></div>
<div style="left:315px;top:516px;width:74px;height:19px;background:#f0f0ff"></div>
<div style="left:390px;top:516px;width:224px;height:19px;background:#fff"></div>
<div style="left:615px;top:516px;width:74px;height:19px;background:#ffeeee"></div>
<div style="left:690px;top:516px;width:74px;height:19px;background:#ffeeee"></div>
<div style="left:765px;top:516px;width:74px;height:19px;background:#ffeeee"></div>
<div style="left:840px;top:516px;width:74px;height:19px;background:#ffeeee"></div>
<div style="left:915px;top:516px;width:74px;height:19px;background:#f0fff0"></div>
<div style="left:90px;top:536px;width:224px;height:20px;background:#e8e8ff"></div>
<div style="left:315px;top:536px;width:74px;height:20px;background:#e0e0ff"></div>
<div style="left:390px;top:536px;width:224px;height:20px;background:#ffe8e8"></div>
<div style="left:615px;top:536px;width:74px;height:20px;background:#ffe0e0"></div>
<div style="left:690px;top:536px;width:74px;height:20px;background:#ffe0e0"></div>
<div style="left:765px;top:536px;width:74px;height:20px;background:#ffe0e0"></div>
<div style="left:840px;top:536px;width:74px;height:20px;background:#ffe0e0"></div>
<div style="left:915px;top:536px;width:74px;height:20px;background:#e0ffe0"></div>
<div style="left:90px;top:535px;width:900px;height:1px;background:#c0c0c0"></div>
<div style="left:90px;top:556px;width:900px;height:1px;background:#c0c0c0"></div>
<div style="left:314px;top:516px;width:1px;height:41px;background:#c0c0c0"></div>
<div style="left:389px;top:516px;width:1px;height:41px;background:#c0c0c0"></div>
<div style="left:614px;top:516px;width:1px;height:41px;background:#c0c0c0"></div>
<div style="left:689px;top:516px;width:1px;height:41px;background:#c0c0c0"></div>
<div style="left:764px;top:516px;width:1px;height:41px;background:#c0c0c0"></div>
<div style="left:839px;top:516px;width:1px;height:41px;background:#c0c0c0"></div>
<div style="left:914px;top:516px;width:1px;height:41px;background:#c0c0c0"></div>
<div style="left:989px;top:516px;width:1px;height:41px;background:#c0c0c0"></div>
<div class="t tb" style="left:-89px;top:539px;width:400px;text-align:right;transform-origin:100% 50%;">Summe WHG 1</div>
<div class="t tb" style="left:-14px;top:539px;width:400px;text-align:right;transform-origin:100% 50%;">0,000</div>
<div class="t tb" style="left:211px;top:539px;width:400px;text-align:right;transform-origin:100% 50%;">Summe WHG 1</div>
<div class="t tb" style="left:286px;top:539px;width:400px;text-align:right;transform-origin:100% 50%;">0,000</div>
<div class="t tb" style="left:361px;top:539px;width:400px;text-align:right;transform-origin:100% 50%;">0,000</div>
<div class="t tb" style="left:436px;top:539px;width:400px;text-align:right;transform-origin:100% 50%;">0,000</div>
<div class="t tb" style="left:511px;top:539px;width:400px;text-align:right;transform-origin:100% 50%;">0,000</div>
<div class="t tbb" style="left:586px;top:539px;width:400px;text-align:right;transform-origin:100% 50%;">0,000</div>
<div style="left:0px;top:557px;width:89px;height:41px;background:#f0f0f0;border-top:1px solid #fff;border-left:1px solid #fff;border-right:1px solid #c8c8c8;border-bottom:1px solid #c8c8c8"></div>
<div class="t tb" style="left:-313.5px;top:560px;width:400px;text-align:right;transform-origin:100% 50%;">WHG 2</div>
<div style="left:0px;top:598px;width:90px;height:1px;background:#000"></div>
<div style="left:89px;top:557px;width:1px;height:42px;background:#000"></div>
<div style="left:90px;top:557px;width:224px;height:20px;background:#fff"></div>
<div style="left:315px;top:557px;width:74px;height:20px;background:#f0f0ff"></div>
<div style="left:390px;top:557px;width:224px;height:20px;background:#fff"></div>
<div style="left:615px;top:557px;width:74px;height:20px;background:#ffeeee"></div>
<div style="left:690px;top:557px;width:74px;height:20px;background:#ffeeee"></div>
<div style="left:765px;top:557px;width:74px;height:20px;background:#ffeeee"></div>
<div style="left:840px;top:557px;width:74px;height:20px;background:#ffeeee"></div>
<div style="left:915px;top:557px;width:74px;height:20px;background:#f0fff0"></div>
<div style="left:90px;top:578px;width:224px;height:20px;background:#e8e8ff"></div>
<div style="left:315px;top:578px;width:74px;height:20px;background:#e0e0ff"></div>
<div style="left:390px;top:578px;width:224px;height:20px;background:#ffe8e8"></div>
<div style="left:615px;top:578px;width:74px;height:20px;background:#ffe0e0"></div>
<div style="left:690px;top:578px;width:74px;height:20px;background:#ffe0e0"></div>
<div style="left:765px;top:578px;width:74px;height:20px;background:#ffe0e0"></div>
<div style="left:840px;top:578px;width:74px;height:20px;background:#ffe0e0"></div>
<div style="left:915px;top:578px;width:74px;height:20px;background:#e0ffe0"></div>
<div style="left:90px;top:577px;width:900px;height:1px;background:#c0c0c0"></div>
<div style="left:90px;top:598px;width:900px;height:1px;background:#c0c0c0"></div>
<div style="left:314px;top:557px;width:1px;height:42px;background:#c0c0c0"></div>
<div style="left:389px;top:557px;width:1px;height:42px;background:#c0c0c0"></div>
<div style="left:614px;top:557px;width:1px;height:42px;background:#c0c0c0"></div>
<div style="left:689px;top:557px;width:1px;height:42px;background:#c0c0c0"></div>
<div style="left:764px;top:557px;width:1px;height:42px;background:#c0c0c0"></div>
<div style="left:839px;top:557px;width:1px;height:42px;background:#c0c0c0"></div>
<div style="left:914px;top:557px;width:1px;height:42px;background:#c0c0c0"></div>
<div style="left:989px;top:557px;width:1px;height:42px;background:#c0c0c0"></div>
<div class="t tb" style="left:436px;top:560px;width:400px;text-align:right;transform-origin:100% 50%;">1,000</div>
<div class="t tb" style="left:-89px;top:581px;width:400px;text-align:right;transform-origin:100% 50%;">Summe WHG 2</div>
<div class="t tb" style="left:-14px;top:581px;width:400px;text-align:right;transform-origin:100% 50%;">0,000</div>
<div class="t tb" style="left:211px;top:581px;width:400px;text-align:right;transform-origin:100% 50%;">Summe WHG 2</div>
<div class="t tb" style="left:286px;top:581px;width:400px;text-align:right;transform-origin:100% 50%;">0,000</div>
<div class="t tb" style="left:361px;top:581px;width:400px;text-align:right;transform-origin:100% 50%;">0,000</div>
<div class="t tb" style="left:436px;top:581px;width:400px;text-align:right;transform-origin:100% 50%;">1,000</div>
<div class="t tb" style="left:511px;top:581px;width:400px;text-align:right;transform-origin:100% 50%;">0,000</div>
<div class="t tbb" style="left:586px;top:581px;width:400px;text-align:right;transform-origin:100% 50%;">1,000</div>
<div style="left:0px;top:599px;width:89px;height:41px;background:#f0f0f0;border-top:1px solid #fff;border-left:1px solid #fff;border-right:1px solid #c8c8c8;border-bottom:1px solid #c8c8c8"></div>
<div class="t tb" style="left:-313.5px;top:602px;width:400px;text-align:right;transform-origin:100% 50%;">WHG 3</div>
<div style="left:0px;top:640px;width:90px;height:1px;background:#000"></div>
<div style="left:89px;top:599px;width:1px;height:42px;background:#000"></div>
<div style="left:90px;top:599px;width:224px;height:20px;background:#fff"></div>
<div style="left:315px;top:599px;width:74px;height:20px;background:#f0f0ff"></div>
<div style="left:390px;top:599px;width:224px;height:20px;background:#fff"></div>
<div style="left:615px;top:599px;width:74px;height:20px;background:#ffeeee"></div>
<div style="left:690px;top:599px;width:74px;height:20px;background:#ffeeee"></div>
<div style="left:765px;top:599px;width:74px;height:20px;background:#ffeeee"></div>
<div style="left:840px;top:599px;width:74px;height:20px;background:#ffeeee"></div>
<div style="left:915px;top:599px;width:74px;height:20px;background:#f0fff0"></div>
<div style="left:90px;top:620px;width:224px;height:20px;background:#e8e8ff"></div>
<div style="left:315px;top:620px;width:74px;height:20px;background:#e0e0ff"></div>
<div style="left:390px;top:620px;width:224px;height:20px;background:#ffe8e8"></div>
<div style="left:615px;top:620px;width:74px;height:20px;background:#ffe0e0"></div>
<div style="left:690px;top:620px;width:74px;height:20px;background:#ffe0e0"></div>
<div style="left:765px;top:620px;width:74px;height:20px;background:#ffe0e0"></div>
<div style="left:840px;top:620px;width:74px;height:20px;background:#ffe0e0"></div>
<div style="left:915px;top:620px;width:74px;height:20px;background:#e0ffe0"></div>
<div style="left:90px;top:619px;width:900px;height:1px;background:#c0c0c0"></div>
<div style="left:90px;top:640px;width:900px;height:1px;background:#c0c0c0"></div>
<div style="left:314px;top:599px;width:1px;height:42px;background:#c0c0c0"></div>
<div style="left:389px;top:599px;width:1px;height:42px;background:#c0c0c0"></div>
<div style="left:614px;top:599px;width:1px;height:42px;background:#c0c0c0"></div>
<div style="left:689px;top:599px;width:1px;height:42px;background:#c0c0c0"></div>
<div style="left:764px;top:599px;width:1px;height:42px;background:#c0c0c0"></div>
<div style="left:839px;top:599px;width:1px;height:42px;background:#c0c0c0"></div>
<div style="left:914px;top:599px;width:1px;height:42px;background:#c0c0c0"></div>
<div style="left:989px;top:599px;width:1px;height:42px;background:#c0c0c0"></div>
<div class="t tb" style="left:436px;top:602px;width:400px;text-align:right;transform-origin:100% 50%;">1,000</div>
<div class="t tb" style="left:-89px;top:623px;width:400px;text-align:right;transform-origin:100% 50%;">Summe WHG 3</div>
<div class="t tb" style="left:211px;top:623px;width:400px;text-align:right;transform-origin:100% 50%;">Summe WHG 3</div>
<div style="left:990px;top:376px;width:83px;height:231px;background:#fff"></div>
<div style="left:1073px;top:376px;width:17px;height:231px;background:#e8e8e8"></div>
<div style="left:1073px;top:376px;width:17px;height:17px;border:1px solid #a8a8a8;background:#fff"><svg shape-rendering="crispEdges" style="left:4px;top:5px" width="7" height="4" viewBox="0 0 7 4"><path d="M3 0h1v1h1v1h1v1h1v1h-7v-1h1v-1h1v-1h1z" fill="#6e6e6e"/></svg></div>
<div style="left:1073px;top:392px;width:17px;height:18px;border:1px solid #a8a8a8;background:#fff"></div>
<div style="left:1090px;top:375px;width:1px;height:232px;background:#c8c8c8"></div>
</body></html>
